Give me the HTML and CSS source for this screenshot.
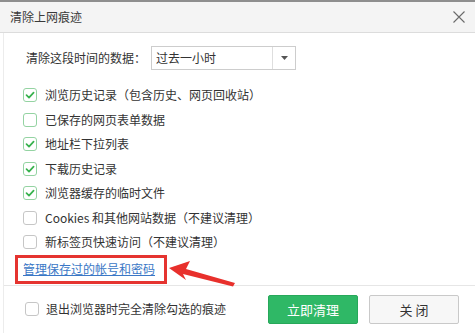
FILE: index.html
```html
<!DOCTYPE html>
<html lang="zh-CN">
<head>
<meta charset="utf-8">
<title>清除上网痕迹</title>
<link rel="stylesheet" href="styles.css">
</head>
<body>
<div class="dialog">
  <div class="title-bar">
    <span class="title">清除上网痕迹</span>
    <svg class="close-x" width="12" height="12" viewBox="0 0 12 12"><path d="M0.5 0.5 L11.5 11.5 M11.5 0.5 L0.5 11.5" stroke="#6a6a6a" stroke-width="1.1" fill="none"/></svg>
  </div>
  <div class="main">
    <div class="content">
      <div class="time-row">
        <span class="time-label">清除这段时间的数据：</span>
        <div class="select">
          <span class="select-value">过去一小时</span>
          <span class="select-btn"><svg width="7" height="4" viewBox="0 0 7 4"><path d="M0 0 H7 L3.5 4 Z" fill="#555"/></svg></span>
        </div>
      </div>
      <ul class="options">
        <li class="option"><span class="cb checked"><svg width="12" height="12" viewBox="0 0 12 12"><path d="M2.5 6.2 L5 8.6 L9.6 3.6" stroke="#37b24d" stroke-width="1.7" fill="none" stroke-linecap="round" stroke-linejoin="round"/></svg></span><span>浏览历史记录（包含历史、网页回收站）</span></li>
        <li class="option"><span class="cb hover"></span><span>已保存的网页表单数据</span></li>
        <li class="option"><span class="cb checked"><svg width="12" height="12" viewBox="0 0 12 12"><path d="M2.5 6.2 L5 8.6 L9.6 3.6" stroke="#37b24d" stroke-width="1.7" fill="none" stroke-linecap="round" stroke-linejoin="round"/></svg></span><span>地址栏下拉列表</span></li>
        <li class="option"><span class="cb checked"><svg width="12" height="12" viewBox="0 0 12 12"><path d="M2.5 6.2 L5 8.6 L9.6 3.6" stroke="#37b24d" stroke-width="1.7" fill="none" stroke-linecap="round" stroke-linejoin="round"/></svg></span><span>下载历史记录</span></li>
        <li class="option"><span class="cb checked"><svg width="12" height="12" viewBox="0 0 12 12"><path d="M2.5 6.2 L5 8.6 L9.6 3.6" stroke="#37b24d" stroke-width="1.7" fill="none" stroke-linecap="round" stroke-linejoin="round"/></svg></span><span>浏览器缓存的临时文件</span></li>
        <li class="option"><span class="cb"></span><span>Cookies 和其他网站数据（不建议清理）</span></li>
        <li class="option"><span class="cb"></span><span>新标签页快速访问（不建议清理）</span></li>
      </ul>
      <div class="link-box"><a class="manage-link" href="#">管理保存过的帐号和密码</a></div>
      <svg class="arrow" width="80" height="34" viewBox="0 0 80 34"><polygon points="3,10 24,3 20,11 69,25 67,28.5 17,16 20,22" fill="#e8302c"/></svg>
    </div>
    <div class="footer">
      <label class="exit-opt"><span class="cb"></span><span>退出浏览器时完全清除勾选的痕迹</span></label>
      <div class="buttons">
        <button class="btn btn-primary">立即清理</button>
        <button class="btn btn-default">关 闭</button>
      </div>
    </div>
  </div>
</div>
</body>
</html>
```
FILE: styles.css
```css
* { box-sizing: border-box; }
html, body { margin: 0; padding: 0; background: #fff; }
body {
  width: 475px;
  height: 333px;
  overflow: hidden;
  font-family: "Noto Sans CJK SC", "Noto Sans", sans-serif;
  font-size: 12px;
  color: #333;
  text-spacing-trim: space-all;
}
.dialog {
  height: 333px;
  border-top: 2px solid #8e8e8e;
  display: flex;
  flex-direction: column;
}
.title-bar {
  height: 31px;
  background: #f4f4f4;
  border-bottom: 1px solid #dcdcdc;
  display: flex;
  align-items: center;
  justify-content: space-between;
  padding: 0 10px;
}
.title { font-size: 12px; color: #3a3a3a; line-height: 30px; }
.close-x { display: block; }
.main {
  flex: 1;
  margin-left: 3px;
  border-left: 1px solid #ececec;
  display: flex;
  flex-direction: column;
}
.content {
  position: relative;
  padding: 13px 0 0 19px;
  display: flex;
  flex-direction: column;
}
.time-row {
  display: flex;
  align-items: center;
  padding-left: 3px;
  height: 24px;
}
.time-label { width: 125px; line-height: 24px; }
.select {
  width: 145px;
  height: 24px;
  border: 1px solid #cdcdcd;
  display: flex;
  align-items: stretch;
}
.select-value { flex: 1; padding-left: 4px; line-height: 21px; }
.select-btn {
  width: 23px;
  border-left: 1px solid #dedede;
  display: flex;
  align-items: center;
  justify-content: center;
}
.options {
  list-style: none;
  margin: 13px 0 0;
  padding: 0;
  display: flex;
  flex-direction: column;
}
.option {
  height: 24.5px;
  display: flex;
  align-items: center;
  gap: 8px;
  line-height: 16px;
}
.cb {
  width: 14px;
  height: 14px;
  border: 1px solid #c6c6c6;
  border-radius: 3px;
  background: #fff;
  display: flex;
  align-items: center;
  justify-content: center;
  flex: none;
}
.cb.checked, .cb.hover { border-color: #94d3a2; }
.cb svg { display: block; }
.link-box {
  align-self: flex-start;
  margin-left: -8px;
  height: 29px;
  border: 3px solid #e53430;
  padding: 1px 9px 0 5px;
}
.manage-link {
  color: #3a77c6;
  text-decoration: underline;
  line-height: 20px;
  font-size: 12px;
}
.arrow {
  position: absolute;
  left: 162px;
  top: 225px;
}
.footer {
  margin-top: 1px;
  border-top: 1px solid #e6e6e6;
  padding: 9px 16px 0 21px;
  display: flex;
  justify-content: space-between;
  align-items: flex-start;
}
.exit-opt {
  display: flex;
  align-items: center;
  gap: 7px;
  height: 29px;
  line-height: 16px;
}
.buttons { display: flex; gap: 11px; }
.btn {
  width: 90px;
  height: 29px;
  font-family: "Noto Sans CJK SC", "Noto Sans", sans-serif;
  font-size: 13px;
  border-radius: 2px;
  padding: 0;
  line-height: 27px;
}
.btn-primary {
  background: #2fb866;
  border: 1px solid #27a85a;
  color: #fff;
}
.btn-default {
  background: #f7f7f7;
  border: 1px solid #c9c9c9;
  color: #333;
}
```
